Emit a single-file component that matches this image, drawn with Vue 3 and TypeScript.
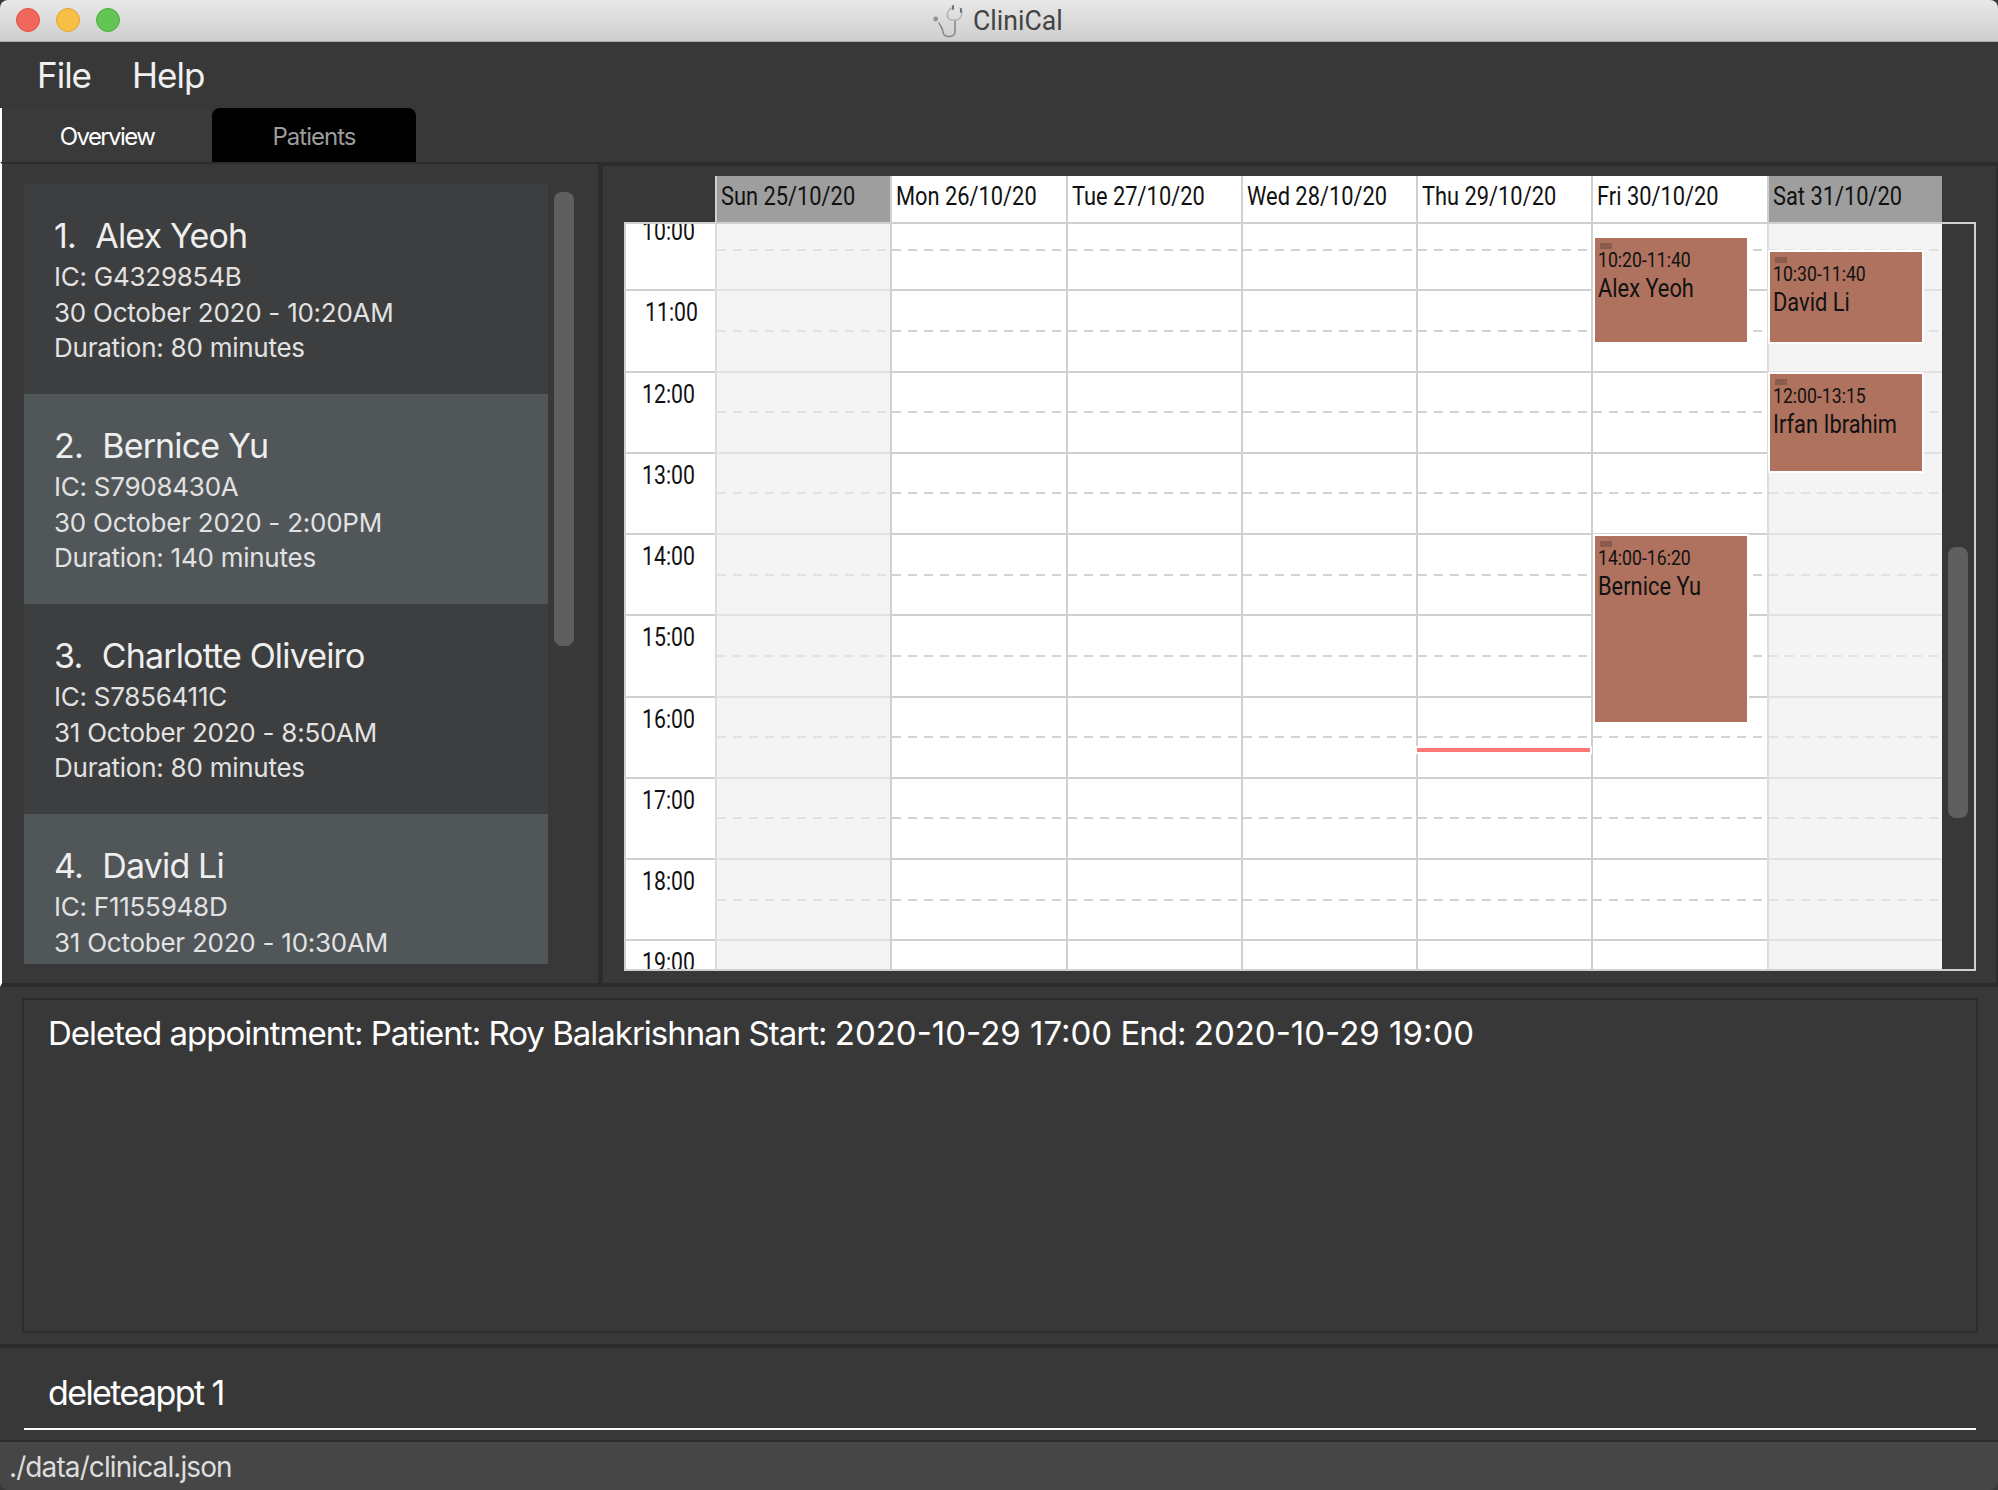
<template>
  <div class="window">
    <header class="titlebar">
      <div class="lights">
        <span class="light red" />
        <span class="light yellow" />
        <span class="light green" />
      </div>
      <div class="title">
        <svg class="logo" viewBox="12 3 34 34" fill="none" stroke="#85898b" stroke-width="1.6" stroke-linecap="round">
          <path d="M19 22 C21 26 23 28 23 31 C23 37 35 37 35 31 V19" />
          <path d="M32 7 C27 9 26 15 29 18 C31 20 38 20 40 17 C43 13 42 9 40 7" stroke="#b4b7b8" />
          <path d="M33 5 V8 M41 8 V11" stroke="#6f7274" stroke-width="2" />
          <circle cx="15.7" cy="18" r="2.4" fill="#8f9496" stroke="none" />
        </svg>
        <span class="title-text">CliniCal</span>
      </div>
    </header>

    <nav class="menu">
      <span>File</span>
      <span>Help</span>
    </nav>

    <div class="tabs">
      <div class="tab active"><span>Overview</span></div>
      <div class="tab"><span>Patients</span></div>
    </div>

    <main class="content">
      <section class="list-pane">
        <div class="list">
          <article v-for="(p, i) in patients" :key="p.name" class="card" :class="{ alt: i % 2 === 1 }">
            <div class="name"><span class="num">{{ i + 1 }}.</span>&nbsp; {{ p.name }}</div>
            <div class="line">IC: {{ p.ic }}</div>
            <div class="line">{{ p.date }}</div>
            <div v-if="p.duration" class="line">Duration: {{ p.duration }} minutes</div>
          </article>
        </div>
        <div class="list-track"><div class="list-thumb" /></div>
      </section>

      <section class="calendar-pane">
        <div class="days">
          <div v-for="d in days" :key="d.label" class="day" :class="{ weekend: d.weekend }">
            <span>{{ d.label }}</span>
          </div>
        </div>
        <div class="agenda">
          <div class="grid">
            <div class="grid-rows">
              <div v-for="h in hours" :key="h" class="row">
                <div class="time" :class="{ shifted: h === 11 }"><span>{{ h }}:00</span></div>
                <div v-for="d in days" :key="d.label" class="cell" :class="{ weekend: d.weekend }" />
              </div>
              <div
                v-for="e in events"
                :key="e.name"
                class="event"
                :style="eventStyle(e)"
              >
                <i class="tag" />
                <div class="event-time"><span>{{ e.from }}-{{ e.to }}</span></div>
                <div class="event-name"><span>{{ e.name }}</span></div>
              </div>
              <div class="now" />
            </div>
          </div>
          <div class="agenda-track"><div class="agenda-thumb" /></div>
        </div>
      </section>
    </main>

    <section class="result-pane">
      <div class="result">
        Deleted appointment: Patient: Roy Balakrishnan Start: <span class="stamp">2020-10-29 17:00</span> End: <span class="stamp">2020-10-29 19:00</span>
      </div>
    </section>

    <section class="command">
      <span>deleteappt 1</span>
    </section>

    <footer class="status"><span>./data/clinical.json</span></footer>
  </div>
</template>

<script setup lang="ts">
interface Patient {
  name: string
  ic: string
  date: string
  duration?: number
}

interface CalEvent {
  name: string
  day: number
  from: string
  to: string
}

const patients: Patient[] = [
  { name: 'Alex Yeoh', ic: 'G4329854B', date: '30 October 2020 - 10:20AM', duration: 80 },
  { name: 'Bernice Yu', ic: 'S7908430A', date: '30 October 2020 - 2:00PM', duration: 140 },
  { name: 'Charlotte Oliveiro', ic: 'S7856411C', date: '31 October 2020 - 8:50AM', duration: 80 },
  { name: 'David Li', ic: 'F1155948D', date: '31 October 2020 - 10:30AM' },
]

const days = [
  { label: 'Sun 25/10/20', weekend: true },
  { label: 'Mon 26/10/20', weekend: false },
  { label: 'Tue 27/10/20', weekend: false },
  { label: 'Wed 28/10/20', weekend: false },
  { label: 'Thu 29/10/20', weekend: false },
  { label: 'Fri 30/10/20', weekend: false },
  { label: 'Sat 31/10/20', weekend: true },
]

const hours = [10, 11, 12, 13, 14, 15, 16, 17, 18, 19]

const events: CalEvent[] = [
  { name: 'Alex Yeoh', day: 5, from: '10:20', to: '11:40' },
  { name: 'David Li', day: 6, from: '10:30', to: '11:40' },
  { name: 'Irfan Ibrahim', day: 6, from: '12:00', to: '13:15' },
  { name: 'Bernice Yu', day: 5, from: '14:00', to: '16:20' },
]

const HOUR = 81.25
const DAY = 175.3

function toHours(t: string): number {
  const [h, m] = t.split(':').map(Number)
  return h + m / 60 - 10
}

function eventStyle(e: CalEvent) {
  const top = toHours(e.from) * HOUR + 1
  return {
    top: `${top}px`,
    height: `${(toHours(e.to) - toHours(e.from)) * HOUR}px`,
    left: `${90 + e.day * DAY}px`,
  }
}
</script>

<style>
html,
body {
  margin: 0;
  background: #383838;
}
</style>

<style scoped>
.window {
  display: flex;
  flex-direction: column;
  width: 1998px;
  height: 1490px;
  overflow: hidden;
  background: #383838;
  font-family: Inter, Roboto, sans-serif;
  border-radius: 8px;
}

.titlebar {
  flex: 0 0 42px;
  box-sizing: border-box;
  display: flex;
  align-items: center;
  justify-content: center;
  position: relative;
  background: linear-gradient(#e8e8e8, #cecece);
  border-bottom: 1px solid #a9a9a9;
}

.lights {
  position: absolute;
  left: 16px;
  top: 8px;
  display: flex;
  gap: 16px;
}

.light {
  width: 24px;
  height: 24px;
  border-radius: 50%;
  box-sizing: border-box;
}

.red {
  background: #f0685c;
  border: 1px solid #dc5245;
}

.yellow {
  background: #f8bf47;
  border: 1px solid #dfa338;
}

.green {
  background: #62c554;
  border: 1px solid #52ab44;
}

.title {
  display: flex;
  align-items: center;
  gap: 7px;
  margin-left: -3px;
}

.logo {
  width: 34px;
  height: 34px;
}

.title-text {
  display: inline-block;
  width: 90px;
  font: 28px Roboto, sans-serif;
  color: #444;
  transform: scaleX(0.95);
  transform-origin: left;
}

.menu {
  flex: 0 0 66px;
  display: flex;
  align-items: center;
  gap: 41px;
  padding-left: 37px;
  font-size: 35px;
  color: #f0f0f0;
  letter-spacing: -1px;
}

.tabs {
  flex: 0 0 54px;
  display: flex;
  border-left: 2px solid #fff;
  font-size: 24px;
  letter-spacing: -1px;
}

.tab {
  width: 204px;
  display: flex;
  align-items: center;
  justify-content: center;
  padding-top: 2px;
  box-sizing: border-box;
  color: #9c9c9c;
  background: #000;
  border-radius: 8px 8px 0 0;
}

.tab.active {
  width: 210px;
  color: #fff;
  background: #3a3a3a;
  letter-spacing: -1.6px;
}

.content {
  flex: 0 0 825px;
  box-sizing: border-box;
  display: flex;
  border-top: 2px solid #2c2c2c;
  border-left: 2px solid #fff;
  border-bottom: 4px solid #2c2c2c;
}

.list-pane {
  flex: 0 0 601px;
  box-sizing: border-box;
  display: flex;
  gap: 6px;
  padding: 20px 0 0 22px;
  border-right: 5px solid #2c2c2c;
}

.list {
  width: 524px;
  height: 780px;
  overflow: hidden;
}

.card {
  box-sizing: border-box;
  height: 210px;
  padding: 31px 0 0 30px;
  background: #3c3e3f;
  color: #e2e2e2;
  font-size: 26px;
  line-height: 35.7px;
  letter-spacing: -0.25px;
}

.card.alt {
  background: #515658;
}

.name {
  font-size: 34px;
  line-height: 42px;
  margin-bottom: 2px;
  color: #eee;
  letter-spacing: -0.85px;
}

.num {
  margin-right: 2px;
}

.list-track {
  width: 20px;
  padding-top: 8px;
}

.list-thumb {
  height: 454px;
  background: #5f5f5f;
  border-radius: 8px;
}

.calendar-pane {
  flex: 1;
  box-sizing: border-box;
  padding: 10px 0 0 21px;
  border-top: 2px solid #2c2c2c;
  border-right: 2px solid #2c2c2c;
}

.days {
  display: grid;
  grid-template-columns: repeat(7, 175.3px);
  height: 46px;
  margin-left: 91px;
}

.day {
  box-sizing: border-box;
  background: #fff;
  border-left: 2px solid #d0d0d0;
  padding: 4px 0 0 4px;
  font: 26px/32px Roboto, sans-serif;
  color: #111;
  overflow: hidden;
  white-space: nowrap;
}

.day span {
  display: inline-block;
  transform: scaleX(0.84);
  transform-origin: left;
}

.day.weekend {
  background: #9e9e9e;
}

.agenda {
  box-sizing: border-box;
  width: 1352px;
  height: 749px;
  display: flex;
  border: 2px solid #d0d0d0;
  background: #383838;
}

.grid {
  width: 1316px;
  overflow: hidden;
}

.grid-rows {
  position: relative;
  margin-top: -16px;
}

.row {
  display: grid;
  grid-template-columns: 89px repeat(7, 175.3px);
  height: 81.25px;
  box-sizing: border-box;
}

.time {
  box-sizing: border-box;
  background: #fff;
  border-top: 2px solid #d0d0d0;
  padding: 6px 0 0 16px;
  font: 25px/32px Roboto, sans-serif;
  color: #111;
}

.time.shifted {
  padding-left: 19px;
}

.time span {
  display: inline-block;
  transform: scaleX(0.85);
  transform-origin: left;
}

.cell {
  box-sizing: border-box;
  background-color: #fff;
  background-image: repeating-linear-gradient(90deg, #d3d3d3 0 9px, transparent 9px 16px);
  background-size: 100% 2px;
  background-position: 0 50%;
  background-repeat: no-repeat;
  border-top: 2px solid #d0d0d0;
  border-left: 2px solid #d0d0d0;
}

.cell.weekend {
  background-color: #f4f4f4;
  background-image: repeating-linear-gradient(90deg, #e2e2e2 0 9px, transparent 9px 16px);
  border-top-color: #e2e2e2;
  border-left-color: #dcdcdc;
}

.event {
  position: absolute;
  box-sizing: border-box;
  width: 156px;
  padding: 5px 0 0 3px;
  background: #ae725f;
  border: 2px solid #fff;
  color: #111;
  overflow: hidden;
}

.tag {
  display: block;
  width: 12px;
  height: 6px;
  margin-left: 2px;
  background: #8a5c4e;
}

.event-time {
  font: 21px/22px Roboto, sans-serif;
  white-space: nowrap;
}

.event-name {
  font: 26px/34px Roboto, sans-serif;
  white-space: nowrap;
}

.event-time span,
.event-name span {
  display: inline-block;
  transform: scaleX(0.84);
  transform-origin: left;
}

.now {
  position: absolute;
  left: 789px;
  top: 537.5px;
  box-sizing: border-box;
  width: 177px;
  height: 8px;
  background: #ff7878;
  border: 2px solid #fff;
}

.agenda-track {
  width: 31px;
  padding: 323px 0 0 6px;
  box-sizing: border-box;
}

.agenda-thumb {
  width: 20px;
  height: 271px;
  background: #5f5f5f;
  border-radius: 8px;
}

.result-pane {
  flex: 0 0 361px;
  box-sizing: border-box;
  padding: 11px 20px 11px 22px;
  border-bottom: 4px solid #2c2c2c;
}

.result {
  box-sizing: border-box;
  height: 100%;
  border: 2px solid #2c2c2c;
  padding: 11px 0 0 24px;
  font-size: 33px;
  line-height: 44px;
  color: #fff;
  letter-spacing: -1px;
  white-space: nowrap;
}

.stamp {
  letter-spacing: 0;
}

.command {
  flex: 0 0 82px;
  box-sizing: border-box;
  margin: 0 22px 10px 24px;
  padding: 23px 0 0 24px;
  border-bottom: 2px solid #fff;
  font-size: 34px;
  line-height: 44px;
  color: #fff;
  letter-spacing: -1.6px;
}

.status {
  flex: 1;
  background: #464646;
  border-top: 2px solid #2c2c2c;
  padding: 8px 0 0 9px;
  font-size: 28px;
  color: #ddd;
  letter-spacing: -0.9px;
}
</style>
